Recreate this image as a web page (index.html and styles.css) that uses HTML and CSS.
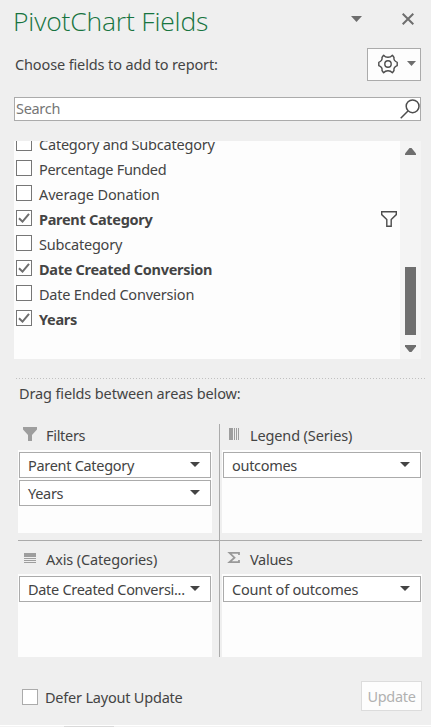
FILE: index.html
```html
<!DOCTYPE html>
<html lang="en">
<head>
<meta charset="utf-8">
<title>PivotChart Fields</title>
<link rel="stylesheet" href="styles.css">
</head>
<body>
<main class="pane">
  <header class="head">
    <h1 class="title">PivotChart Fields</h1>
    <svg class="head-menu" width="11" height="6" viewBox="0 0 11 6"><path d="M0 0h11L5.5 6z" fill="#6e6e6e"/></svg>
    <svg class="head-close" width="12" height="12" viewBox="0 0 12 12"><path d="M.7.7l10.6 10.6M11.3.7L.7 11.3" stroke="#6e6e6e" stroke-width="2" fill="none"/></svg>
  </header>
  <div class="choose">
    <span class="text choose-label">Choose fields to add to report:</span>
    <button class="tools">
      <svg width="20" height="20" viewBox="0 0 20 20" fill="none" stroke="#4d4d4d" stroke-width="1.4" stroke-linejoin="round"><path d="M5.600 1.200Q7.300 3.300 10 3.300T14.400 1.200L16 3.500Q15.300 6.800 19.200 8.300V11.700Q15.300 13.200 16 16.500L14.400 18.800Q12.700 16.700 10 16.700T5.600 18.800L4 16.500Q4.700 13.200.8 11.700V8.300Q4.700 6.800 4 3.500Z"/><circle cx="10" cy="10" r="3.2"/></svg>
      <svg width="9" height="5" viewBox="0 0 9 5"><path d="M0 0h9L4.500 5z" fill="#6e6e6e"/></svg>
    </button>
  </div>
  <div class="search">
    <span class="text search-hint">Search</span>
    <svg width="20" height="20" viewBox="0 0 20 20" fill="none" stroke="#4d4d4d" stroke-width="1.5"><circle cx="12.600" cy="7.300" r="6.400"/><path d="M8 12L.7 19.300"/></svg>
  </div>
  <div class="list">
    <ul class="rows">
      <li class="row"><i class="box"></i><span class="text loose">Category and Subcategory</span></li>
      <li class="row"><i class="box"></i><span class="text">Percentage Funded</span></li>
      <li class="row"><i class="box"></i><span class="text looser">Average Donation</span></li>
      <li class="row on"><i class="box"><svg width="12" height="10" viewBox="0 0 12 10"><path d="M1 5.200L4.500 8.600L11 .8"/></svg></i><span class="text">Parent Category</span>
        <svg class="funnel" width="16" height="16" viewBox="0 0 16 16" fill="none" stroke="#4d4d4d" stroke-width="1.400"><path d="M.7.7H15.300V3.600L10.200 8.600V15.300H5.800V8.600L.7 3.600Z"/></svg></li>
      <li class="row"><i class="box"></i><span class="text loose">Subcategory</span></li>
      <li class="row on"><i class="box"><svg width="12" height="10" viewBox="0 0 12 10"><path d="M1 5.200L4.500 8.600L11 .8"/></svg></i><span class="text">Date Created Conversion</span></li>
      <li class="row"><i class="box"></i><span class="text loose">Date Ended Conversion</span></li>
      <li class="row on"><i class="box"><svg width="12" height="10" viewBox="0 0 12 10"><path d="M1 5.200L4.500 8.600L11 .8"/></svg></i><span class="text">Years</span></li>
    </ul>
    <div class="scroll">
      <svg width="11" height="7" viewBox="0 0 11 7"><path d="M4.500 0h2L11 5.500V7H0V5.500z" fill="#6e6e6e"/></svg>
      <div class="thumb"></div>
      <svg width="11" height="7" viewBox="0 0 11 7"><path d="M0 0h11v1.500L6.500 7h-2L0 1.500z" fill="#6e6e6e"/></svg>
    </div>
  </div>
  <div class="divider"></div>
  <p class="text looser drag">Drag fields between areas below:</p>
  <div class="areas">
    <section class="area left top">
      <h2 class="area-head"><svg width="16" height="15" viewBox="0 0 16 15"><path d="M1 0h14v2.500L10 8v6H6V8L1 2.500z" fill="#9e9e9e"/></svg><span class="text">Filters</span></h2>
      <div class="drop">
        <div class="field"><span class="text">Parent Category</span><b class="arrow"></b></div>
        <div class="field"><span class="text">Years</span><b class="arrow"></b></div>
      </div>
    </section>
    <section class="area right top">
      <h2 class="area-head"><svg width="16" height="15" viewBox="0 0 16 15"><path d="M3 1h4v12H3zM8 1h1v12H8zM10 1h1v12h-1zM12 1h1v12h-1z" fill="#9e9e9e"/></svg><span class="text looser">Legend (Series)</span></h2>
      <div class="drop">
        <div class="field"><span class="text">outcomes</span><b class="arrow"></b></div>
      </div>
    </section>
    <section class="area left">
      <h2 class="area-head"><svg width="16" height="15" viewBox="0 0 16 15"><path d="M2 2h12v4H2zM2 7h12v1H2zM2 9h12v1H2zM2 11h12v1H2z" fill="#9e9e9e"/></svg><span class="text looser">Axis (Categories)</span></h2>
      <div class="drop">
        <div class="field"><span class="text">Date Created Conversi...</span><b class="arrow"></b></div>
      </div>
    </section>
    <section class="area right">
      <h2 class="area-head"><svg width="16" height="15" viewBox="0 0 16 15"><path d="M13 4V1.800H3.500L8.500 6.700L3.500 11.200H13V9" fill="none" stroke="#999" stroke-width="1.800"/></svg><span class="text">Values</span></h2>
      <div class="drop">
        <div class="field"><span class="text loose">Count of outcomes</span><b class="arrow"></b></div>
      </div>
    </section>
  </div>
  <footer class="foot">
    <i class="box defer"></i>
    <span class="text loose defer-label">Defer Layout Update</span>
    <button class="update"><span class="text">Update</span></button>
  </footer>
  <div class="edge"><div class="edge-tab"></div></div>
</main>
</body>
</html>
```
FILE: styles.css
```css
* { box-sizing: border-box; margin: 0; padding: 0; }
body { width: 431px; height: 727px; overflow: hidden; background: #efefef; }
svg { display: block; flex: none; }
button { border: 0; background: none; }
.pane { display: flex; flex-direction: column; width: 431px; height: 727px; color: #444; }
.text, .title { font-family: "Noto Sans", "Open Sans", sans-serif; white-space: nowrap; }
.text { font-size: 14.5px; line-height: 20px; font-weight: 400; letter-spacing: -0.3px; }
.loose { letter-spacing: -0.21px; }
.looser { letter-spacing: -0.13px; }
.head { display: flex; height: 48px; padding-left: 13px; }
.title { width: 337px; font-family: "Open Sans", "Noto Sans", sans-serif; font-size: 26.5px; font-weight: 300; line-height: 36px; padding-top: 3px; letter-spacing: -0.18px; color: #17743f; }
.head-menu { margin: 16px 0 0 1px; }
.head-close { margin: 13px 0 0 40px; }
.choose { display: flex; height: 49px; padding-left: 15px; }
.choose-label { width: 352px; padding-top: 6px; letter-spacing: -0.13px; }
.tools { display: flex; align-items: center; gap: 9px; width: 54px; height: 33px; padding-left: 10px; padding-bottom: 2px; border: 1px solid #ababab; background: #fdfdfd; }
.search { display: flex; justify-content: space-between; width: 407px; height: 24px; margin-left: 14px; padding-left: 1px; border: 1px solid #ababab; background: #fff; }
.search-hint { color: #767676; line-height: 20px; }
.search svg { margin-top: 1px; }
.list { display: flex; width: 407px; height: 218px; margin: 20px 0 0 14px; overflow: hidden; background: #fdfdfd; }
.rows { flex: 1; margin-top: -9px; list-style: none; }
.row { display: flex; height: 25px; padding: 3px 0 0 2px; }
.row .text { margin: -1px 0 0 7px; }
.row.on .text { font-weight: 700; }
.box { display: block; flex: none; width: 16px; height: 16px; border: 1px solid #767676; background: #fff; }
.box svg { margin: 2px 0 0 1px; fill: none; stroke: #6e6e6e; stroke-width: 2; }
.funnel { margin: 1px 3px 0 auto; }
.scroll { display: flex; flex-direction: column; align-items: center; width: 21px; padding: 7px 0; background: #f4f4f4; }
.thumb { width: 11px; height: 68px; margin: 112px 0 10px; background: #6e6e6e; }
.divider { width: 409px; height: 1px; margin: 19px 0 0 16px; background: repeating-linear-gradient(90deg, #c0c0c0 0 1px, transparent 1px 3px); }
.drag { height: 45px; padding: 4px 0 0 19px; }
.areas { display: grid; grid-template-columns: 202px 202px; grid-template-rows: 117px 116px; margin-left: 18px; }
.area { display: flex; flex-direction: column; }
.left { border-right: 1px solid #ababab; padding-right: 7px; }
.right { padding-left: 2px; }
.top { border-bottom: 1px solid #ababab; padding-bottom: 7px; }
.area-head { display: flex; height: 26px; padding-left: 4px; flex: none; font-weight: 400; }
.area:not(.top) .area-head { height: 33px; padding-top: 8px; }
.area-head svg { margin-top: 3px; }
.area:not(.top) .area-head svg { margin-top: 2px; }
.area-head .text { margin: 1px 0 0 8px; }
.area:not(.top) .area-head .text { margin-top: 0; }
.drop { display: flex; flex-direction: column; gap: 2px; flex: 1; padding: 2px 1px; background: #fdfdfd; }
.field { display: flex; justify-content: space-between; height: 26px; padding: 2px 10px 0 8px; border: 1px solid #ababab; background: #fff; }
.arrow { flex: none; width: 10px; height: 5px; margin-top: 7px; background: #444; clip-path: polygon(0 0, 100% 0, 50% 100%); }
.foot { display: flex; padding: 24px 9px 0 22px; height: 68px; }
.defer { margin-top: 8px; border-color: #ababab; }
.defer-label { flex: 1; margin: 6px 0 0 7px; }
.update { width: 61px; height: 30px; border: 1px solid #dcdcdc; background: #fdfdfd; }
.update .text { color: #b1b1b1; }
.edge { height: 2px; border-top: 1px solid #fff; background: #f3f3f3; }
.edge-tab { width: 50px; height: 1px; margin-left: 64px; background: #dadada; }
```
